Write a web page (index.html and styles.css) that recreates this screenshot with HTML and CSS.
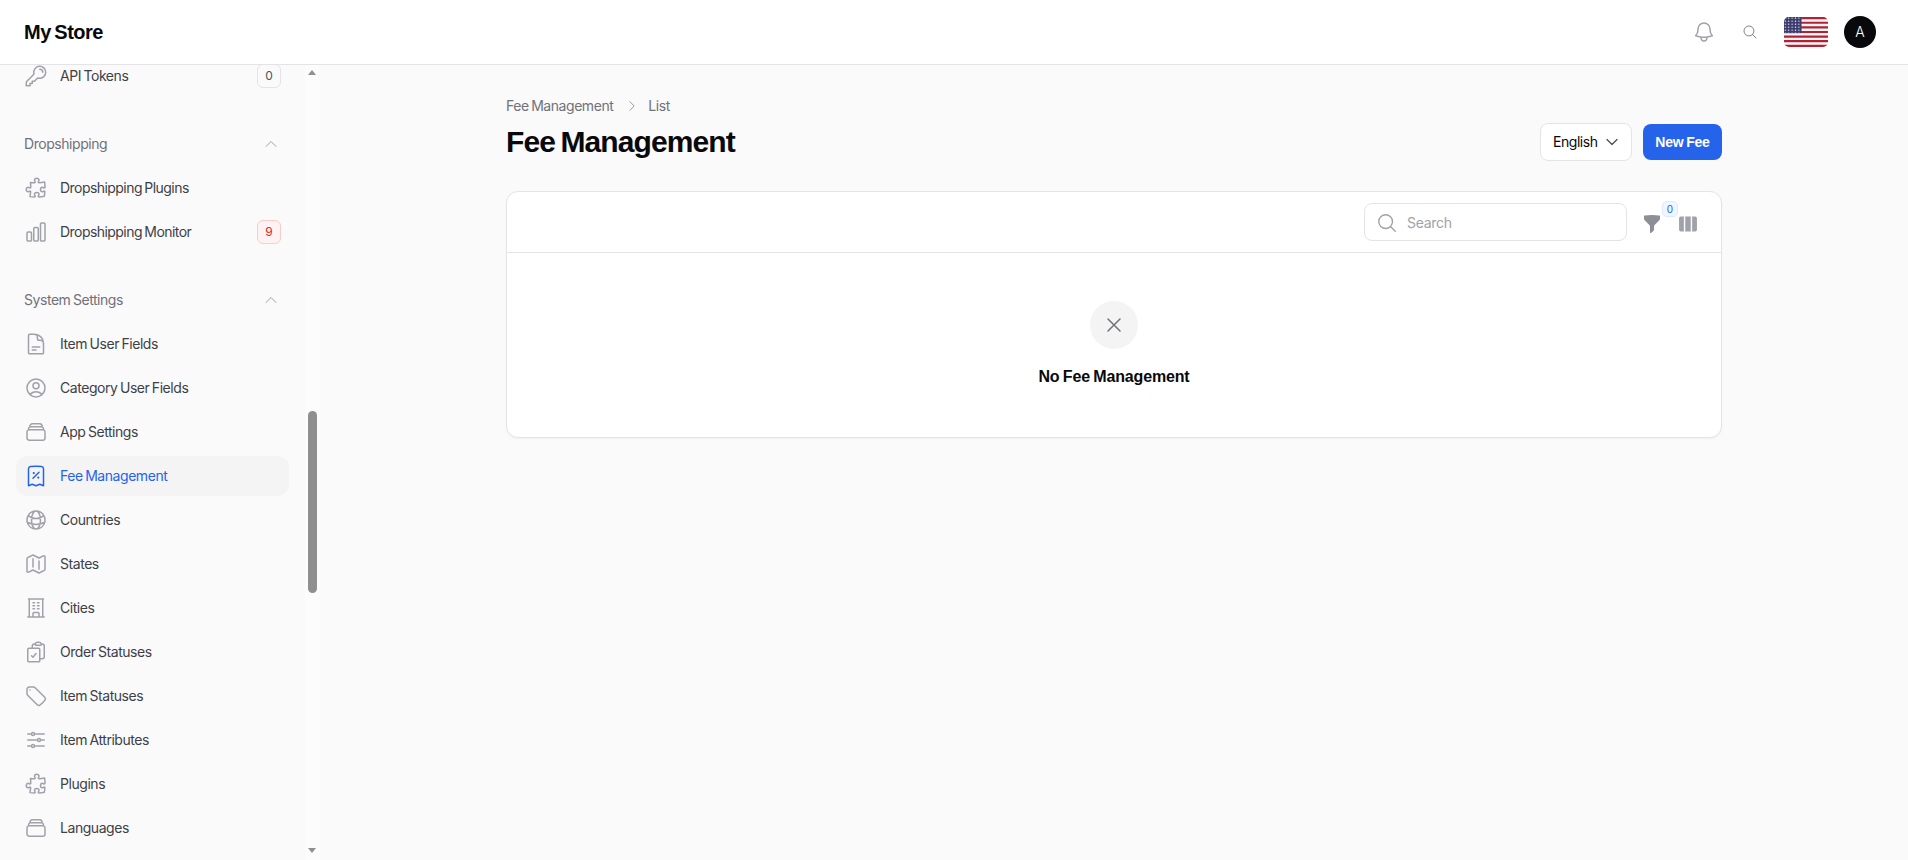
FILE: index.html
```html
<!DOCTYPE html>
<html lang="en">
<head>
<meta charset="utf-8">
<title>Fee Management</title>
<link rel="stylesheet" href="styles.css">
</head>
<body>
<svg class="defs" width="0" height="0" aria-hidden="true">
  <symbol id="i-puzzle" viewBox="0 0 24 24"><path d="M14.25 6.087c0-.355.186-.676.401-.959.221-.29.349-.634.349-1.003 0-1.036-1.007-1.875-2.25-1.875s-2.25.84-2.25 1.875c0 .369.128.713.349 1.003.215.283.401.604.401.959v0a.64.64 0 0 1-.657.643 48.39 48.39 0 0 1-4.163-.3c.186 1.613.293 3.25.315 4.907a.656.656 0 0 1-.658.663v0c-.355 0-.676-.186-.959-.401a1.647 1.647 0 0 0-1.003-.349c-1.036 0-1.875 1.007-1.875 2.25s.84 2.25 1.875 2.25c.369 0 .713-.128 1.003-.349.283-.215.604-.401.959-.401v0c.31 0 .555.26.532.57a48.039 48.039 0 0 1-.642 5.056c1.518.19 3.058.309 4.616.354a.64.64 0 0 0 .657-.643v0c0-.355-.186-.676-.401-.959a1.647 1.647 0 0 1-.349-1.003c0-1.035 1.008-1.875 2.25-1.875 1.243 0 2.25.84 2.25 1.875 0 .369-.128.713-.349 1.003-.215.283-.4.604-.4.959v0c0 .333.277.599.61.58a48.1 48.1 0 0 0 5.427-.63 48.05 48.05 0 0 0 .582-4.717.532.532 0 0 0-.533-.57v0c-.355 0-.676.186-.959.401-.29.221-.634.349-1.003.349-1.035 0-1.875-1.007-1.875-2.25s.84-2.25 1.875-2.25c.37 0 .713.128 1.003.349.283.215.604.401.96.401v0a.656.656 0 0 0 .658-.663 48.422 48.422 0 0 0-.37-5.36c-1.886.342-3.81.574-5.766.689a.578.578 0 0 1-.61-.58v0Z"/></symbol>
  <symbol id="i-stack" viewBox="0 0 24 24"><path d="M6 6.878V6a2.25 2.25 0 0 1 2.25-2.25h7.5A2.25 2.25 0 0 1 18 6v.878m-12 0c.235-.083.487-.128.75-.128h10.5c.263 0 .515.045.75.128m-12 0A2.25 2.25 0 0 0 4.5 9v.878m13.5-3A2.25 2.25 0 0 1 19.5 9v.878m0 0a2.246 2.246 0 0 0-.75-.128H5.25c-.263 0-.515.045-.75.128m15 0A2.25 2.25 0 0 1 21 12v6a2.25 2.25 0 0 1-2.25 2.25H5.25A2.25 2.25 0 0 1 3 18v-6c0-.98.626-1.813 1.5-2.122"/></symbol>
  <symbol id="i-up" viewBox="0 0 24 24"><path d="m4.5 15.75 7.5-7.5 7.5 7.5"/></symbol>
</svg>

<header class="topbar">
  <div class="brand">My Store</div>
  <div class="top-actions">
    <svg class="ico bell" viewBox="0 0 24 24"><path d="M14.857 17.082a23.848 23.848 0 0 0 5.454-1.31A8.967 8.967 0 0 1 18 9.75V9A6 6 0 0 0 6 9v.75a8.967 8.967 0 0 1-2.312 6.022c1.733.64 3.56 1.085 5.455 1.31m5.714 0a24.255 24.255 0 0 1-5.714 0m5.714 0a3 3 0 1 1-5.714 0"/></svg>
    <svg class="ico glass" viewBox="0 0 24 24"><path d="m21 21-5.197-5.197m0 0A7.5 7.5 0 1 0 5.196 5.196a7.5 7.5 0 0 0 10.607 10.607Z"/></svg>
    <svg class="flag" viewBox="0 0 44 30">
      <defs>
        <pattern id="stars" width="3.4" height="3" patternUnits="userSpaceOnUse"><circle cx="1.3" cy="1.2" r=".65" fill="#fff"/></pattern>
      </defs>
      <rect width="44" height="30" fill="#f8f6f6"/>
      <path class="stripe" d="M0 1.15h44M0 5.76h44M0 10.38h44M0 15h44M0 19.6h44M0 24.2h44M0 28.85h44"/>
      <rect width="17.6" height="16.2" fill="#3c3b6e"/>
      <rect width="17.6" height="16.2" fill="url(#stars)"/>
    </svg>
    <div class="avatar">A</div>
  </div>
</header>

<div class="shell">
  <aside class="sidebar">
    <nav class="nav">
      <div class="group first">
        <a class="item"><svg class="ico nav-ico" viewBox="0 0 24 24"><path d="M15.75 5.25a3 3 0 0 1 3 3m3 0a6 6 0 0 1-7.029 5.912c-.563-.097-1.159.026-1.563.43L10.5 17.25H8.25v2.25H6v2.25H2.25v-2.818c0-.597.237-1.17.659-1.591l6.499-6.499c.404-.404.527-1 .43-1.563A6 6 0 1 1 21.75 8.25Z"/></svg><span class="label">API Tokens</span><span class="count">0</span></a>
      </div>
      <div class="group">
        <div class="group-head"><span>Dropshipping</span><svg class="ico chev"><use href="#i-up"/></svg></div>
        <a class="item"><svg class="ico nav-ico"><use href="#i-puzzle"/></svg><span class="label tight">Dropshipping Plugins</span></a>
        <a class="item"><svg class="ico nav-ico" viewBox="0 0 24 24"><path d="M3 13.125C3 12.504 3.504 12 4.125 12h2.25c.621 0 1.125.504 1.125 1.125v6.75C7.5 20.496 6.996 21 6.375 21h-2.25A1.125 1.125 0 0 1 3 19.875v-6.75ZM9.75 8.625c0-.621.504-1.125 1.125-1.125h2.25c.621 0 1.125.504 1.125 1.125v11.25c0 .621-.504 1.125-1.125 1.125h-2.25a1.125 1.125 0 0 1-1.125-1.125V8.625ZM16.5 4.125c0-.621.504-1.125 1.125-1.125h2.25C20.496 3 21 3.504 21 4.125v15.75c0 .621-.504 1.125-1.125 1.125h-2.25a1.125 1.125 0 0 1-1.125-1.125V4.125Z"/></svg><span class="label tight">Dropshipping Monitor</span><span class="count danger">9</span></a>
      </div>
      <div class="group">
        <div class="group-head"><span>System Settings</span><svg class="ico chev"><use href="#i-up"/></svg></div>
        <a class="item"><svg class="ico nav-ico" viewBox="0 0 24 24"><path d="M19.5 14.25v-2.625a3.375 3.375 0 0 0-3.375-3.375h-1.5A1.125 1.125 0 0 1 13.5 7.125v-1.5a3.375 3.375 0 0 0-3.375-3.375H8.25m0 12.75h7.5m-7.5 3H12M10.5 2.25H5.625c-.621 0-1.125.504-1.125 1.125v17.25c0 .621.504 1.125 1.125 1.125h12.75c.621 0 1.125-.504 1.125-1.125V11.25a9 9 0 0 0-9-9Z"/></svg><span class="label">Item User Fields</span></a>
        <a class="item"><svg class="ico nav-ico" viewBox="0 0 24 24"><path d="M17.982 18.725A7.488 7.488 0 0 0 12 15.75a7.488 7.488 0 0 0-5.982 2.975m11.963 0a9 9 0 1 0-11.963 0m11.963 0A8.966 8.966 0 0 1 12 21a8.966 8.966 0 0 1-5.982-2.275M15 9.75a3 3 0 1 1-6 0 3 3 0 0 1 6 0Z"/></svg><span class="label">Category User Fields</span></a>
        <a class="item"><svg class="ico nav-ico"><use href="#i-stack"/></svg><span class="label">App Settings</span></a>
        <a class="item active"><svg class="ico nav-ico" viewBox="0 0 24 24"><path d="m9 14.25 6-6m4.5-3.493V21.75l-3.75-1.5-3.75 1.5-3.75-1.5-3.75 1.5V4.757c0-1.108.806-2.057 1.907-2.185a48.507 48.507 0 0 1 11.186 0c1.1.128 1.907 1.077 1.907 2.185ZM9.75 9h.008v.008H9.75V9Zm.375 0a.375.375 0 1 1-.75 0 .375.375 0 0 1 .75 0Zm4.125 4.5h.008v.008h-.008V13.5Zm.375 0a.375.375 0 1 1-.75 0 .375.375 0 0 1 .75 0Z"/></svg><span class="label">Fee Management</span></a>
        <a class="item"><svg class="ico nav-ico" viewBox="0 0 24 24"><path d="M12 21a9.004 9.004 0 0 0 8.716-6.747M12 21a9.004 9.004 0 0 1-8.716-6.747M12 21c2.485 0 4.5-4.03 4.5-9S14.485 3 12 3m0 18c-2.485 0-4.5-4.03-4.5-9S9.515 3 12 3m0 0a8.997 8.997 0 0 1 7.843 4.582M12 3a8.997 8.997 0 0 0-7.843 4.582m15.686 0A11.953 11.953 0 0 1 12 10.5c-2.998 0-5.74-1.1-7.843-2.918m15.686 0A8.959 8.959 0 0 1 21 12c0 .778-.099 1.533-.284 2.253m0 0A17.919 17.919 0 0 1 12 16.5c-3.162 0-6.133-.815-8.716-2.247m0 0A9.015 9.015 0 0 1 3 12c0-1.605.42-3.113 1.157-4.418"/></svg><span class="label">Countries</span></a>
        <a class="item"><svg class="ico nav-ico" viewBox="0 0 24 24"><path d="M9 6.75V15m6-6v8.25m.503 3.498 4.875-2.437c.381-.19.622-.58.622-1.006V4.82c0-.836-.88-1.38-1.628-1.006l-3.869 1.934c-.317.159-.69.159-1.006 0L9.503 3.252a1.125 1.125 0 0 0-1.006 0L3.622 5.689C3.24 5.88 3 6.27 3 6.695V19.18c0 .836.88 1.38 1.628 1.006l3.869-1.934c.317-.159.69-.159 1.006 0l4.994 2.497c.317.158.69.158 1.006 0Z"/></svg><span class="label">States</span></a>
        <a class="item"><svg class="ico nav-ico" viewBox="0 0 24 24"><path d="M3.75 21h16.5M4.5 3h15M5.25 3v18m13.5-18v18M9 6.75h1.5m-1.5 3h1.5m-1.5 3h1.5m3-6H15m-1.5 3H15m-1.5 3H15M9 21v-3.375c0-.621.504-1.125 1.125-1.125h3.75c.621 0 1.125.504 1.125 1.125V21"/></svg><span class="label">Cities</span></a>
        <a class="item"><svg class="ico nav-ico" viewBox="0 0 24 24"><path d="M11.35 3.836c-.065.21-.1.433-.1.664 0 .414.336.75.75.75h4.5a.75.75 0 0 0 .75-.75 2.25 2.25 0 0 0-.1-.664m-5.8 0A2.251 2.251 0 0 1 13.5 2.25H15c1.012 0 1.867.668 2.15 1.586m-5.8 0c-.376.023-.75.05-1.124.08C9.095 4.01 8.25 4.973 8.25 6.108V8.25m8.9-4.414c.376.023.75.05 1.124.08 1.131.094 1.976 1.057 1.976 2.192V16.5A2.25 2.25 0 0 1 18 18.75h-2.25m-7.5-10.5H4.875c-.621 0-1.125.504-1.125 1.125v11.25c0 .621.504 1.125 1.125 1.125h9.75c.621 0 1.125-.504 1.125-1.125V18.75m-7.5-10.5h6.375c.621 0 1.125.504 1.125 1.125v9.375m-8.25-3 1.5 1.5 3-3.75"/></svg><span class="label">Order Statuses</span></a>
        <a class="item"><svg class="ico nav-ico" viewBox="0 0 24 24"><path d="M9.568 3H5.25A2.25 2.25 0 0 0 3 5.25v4.318c0 .597.237 1.17.659 1.591l9.581 9.581c.699.699 1.78.872 2.607.33a18.095 18.095 0 0 0 5.223-5.223c.542-.827.369-1.908-.33-2.607L11.16 3.66A2.25 2.25 0 0 0 9.568 3Z"/><path d="M6 6h.008v.008H6V6Z"/></svg><span class="label">Item Statuses</span></a>
        <a class="item"><svg class="ico nav-ico" viewBox="0 0 24 24"><path d="M10.5 6h9.75M10.5 6a1.5 1.5 0 1 1-3 0m3 0a1.5 1.5 0 1 0-3 0M3.75 6H7.5m3 12h9.75m-9.75 0a1.5 1.5 0 0 1-3 0m3 0a1.5 1.5 0 0 0-3 0m-3.75 0H7.5m9-6h3.75m-3.75 0a1.5 1.5 0 0 1-3 0m3 0a1.5 1.5 0 0 0-3 0m-9.75 0h9.75"/></svg><span class="label">Item Attributes</span></a>
        <a class="item"><svg class="ico nav-ico"><use href="#i-puzzle"/></svg><span class="label">Plugins</span></a>
        <a class="item"><svg class="ico nav-ico"><use href="#i-stack"/></svg><span class="label">Languages</span></a>
      </div>
    </nav>
    <div class="scrolltrack">
      <span class="arrow up"></span>
      <span class="thumb"></span>
      <span class="arrow down"></span>
    </div>
  </aside>

  <main class="main">
    <div class="container">
      <div class="crumbs"><span>Fee Management</span><svg class="ico crumb-sep" viewBox="0 0 24 24"><path d="m8.25 4.5 7.5 7.5-7.5 7.5"/></svg><span>List</span></div>
      <div class="title-row">
        <h1>Fee Management</h1>
        <div class="title-actions">
          <div class="select"><span>English</span><svg class="ico sel-chev" viewBox="0 0 24 24"><path d="m19.5 8.25-7.5 7.5-7.5-7.5"/></svg></div>
          <a class="btn">New Fee</a>
        </div>
      </div>
      <section class="card">
        <div class="toolbar">
          <div class="search"><svg class="ico search-ico" viewBox="0 0 24 24"><path d="m21 21-5.197-5.197m0 0A7.5 7.5 0 1 0 5.196 5.196a7.5 7.5 0 0 0 10.607 10.607Z"/></svg><span>Search</span></div>
          <div class="filter">
            <svg class="funnel" viewBox="0 0 20 20"><path d="M2.628 1.601C5.028 1.206 7.49 1 10 1s4.973.206 7.372.601a.75.75 0 0 1 .628.74v2.288a2.25 2.25 0 0 1-.659 1.59l-4.682 4.683a2.25 2.25 0 0 0-.659 1.59v3.037c0 .684-.31 1.33-.844 1.757l-1.937 1.55A.75.75 0 0 1 8 18.25v-5.757a2.25 2.25 0 0 0-.659-1.591L2.659 6.22A2.25 2.25 0 0 1 2 4.629V2.34a.75.75 0 0 1 .628-.74Z"/></svg>
            <span class="filter-badge">0</span>
          </div>
          <svg class="columns" viewBox="0 0 24 24"><path d="M15 3.75H9v16.5h6V3.75ZM16.5 20.25h3.375c1.035 0 1.875-.84 1.875-1.875V5.625c0-1.036-.84-1.875-1.875-1.875H16.5v16.5ZM4.125 3.75H7.5v16.5H4.125a1.875 1.875 0 0 1-1.875-1.875V5.625c0-1.036.84-1.875 1.875-1.875Z"/></svg>
        </div>
        <div class="empty">
          <div class="empty-ico"><svg class="ico x" viewBox="0 0 24 24"><path d="M6 18 18 6M6 6l12 12"/></svg></div>
          <h4>No Fee Management</h4>
        </div>
      </section>
    </div>
  </main>
</div>
</body>
</html>
```
FILE: styles.css
```css
* { box-sizing: border-box; }
html, body { height: 100%; }
body {
  margin: 0;
  height: 860px;
  overflow: hidden;
  display: flex;
  flex-direction: column;
  background: #fafafa;
  color: #09090b;
  font-family: Inter, "Noto Sans", sans-serif;
  font-size: 14px;
  line-height: 20px;
  letter-spacing: -0.45px;
  word-spacing: -1px;
}
.defs { position: absolute; }
.ico { fill: none; stroke: #a1a1aa; stroke-width: 1.5; stroke-linecap: round; stroke-linejoin: round; flex: none; }

/* top bar */
.topbar {
  flex: none;
  height: 65px;
  display: flex;
  align-items: center;
  justify-content: space-between;
  padding: 0 32px 0 24px;
  background: #fff;
  border-bottom: 1px solid #e4e4e7;
  position: relative;
  z-index: 2;
}
.brand { font-family: "Liberation Sans", Inter, sans-serif; font-size: 20px; font-weight: 700; letter-spacing: -0.5px; word-spacing: -1.5px; }
.top-actions { display: flex; align-items: center; }
.bell { width: 24px; height: 24px; margin-right: 26px; }
.glass { width: 16px; height: 16px; margin-right: 26px; stroke: #71717a; stroke-width: 1.3; }
.flag { width: 44px; height: 30px; border-radius: 5px; margin-right: 16px; }
.stripe { stroke: #b22234; stroke-width: 2.2; fill: none; }
.avatar {
  width: 32px; height: 32px; border-radius: 50%;
  background: #09090b; color: #fff;
  display: flex; align-items: center; justify-content: center;
  font-size: 14px; font-weight: 300; letter-spacing: 0;
}

/* layout */
.shell { flex: 1; min-height: 0; display: flex; }
.sidebar { flex: none; width: 320px; display: flex; }
.nav { flex: 1; min-width: 0; overflow: hidden; padding: 0 16px; }
.group { margin-top: 38px; display: flex; flex-direction: column; gap: 4px; }
.group.first { margin-top: -9px; }
.group-head {
  height: 20px;
  margin-bottom: 10px;
  padding: 0 8px;
  display: flex; align-items: center; justify-content: space-between;
  color: #71717a;
}
.chev { width: 16px; height: 16px; margin-right: 2px; }
.item {
  height: 40px;
  flex: none;
  padding: 0 8px;
  display: flex; align-items: center; gap: 12px;
  border-radius: 12px;
  color: #3f3f46;
}
.nav-ico { width: 24px; height: 24px; }
.label { flex: 1; }
.label.tight { letter-spacing: -0.55px; }
.count {
  width: 24px; height: 24px;
  display: flex; align-items: center; justify-content: center;
  border: 1px solid #e4e4e7; border-radius: 6px;
  font-size: 12px; color: #52525b; letter-spacing: 0;
}
.count.danger { background: #fef2f2; border-color: #fecaca; color: #dc2626; }
.item.active { background: #f4f4f5; color: #2563eb; }
.item.active .nav-ico { stroke: #2563eb; }

/* fake classic scrollbar */
.scrolltrack { flex: none; width: 15px; background: #fcfcfc; position: relative; }
.thumb { position: absolute; left: 3px; top: 346px; width: 9px; height: 182px; border-radius: 5px; background: #8f8f8f; }
.arrow { position: absolute; left: 3px; width: 0; height: 0; border-left: 4.5px solid transparent; border-right: 4.5px solid transparent; }
.arrow.up { top: 5px; border-bottom: 5px solid #8f8f8f; }
.arrow.down { bottom: 7px; border-top: 5px solid #8f8f8f; }

/* main */
.main { flex: 1; min-width: 0; padding-top: 31px; }
.container { width: 1216px; margin: 0 auto; }
.crumbs { display: flex; align-items: center; color: #71717a; height: 20px; }
.crumb-sep { width: 14px; height: 14px; margin: 0 9px 0 12px; stroke: #8a8a92; }
.title-row { margin-top: 7px; display: flex; align-items: center; justify-content: space-between; height: 38px; }
h1 { margin: 0; font-family: "Liberation Sans", Inter, sans-serif; font-size: 30px; line-height: 36px; font-weight: 700; letter-spacing: -0.9px; word-spacing: -2px; }
.title-actions { display: flex; align-items: center; gap: 11px; }
.select {
  width: 92px; height: 38px;
  padding: 0 11px 0 12px;
  display: flex; align-items: center; justify-content: space-between;
  background: #fff; border: 1px solid #e4e4e7; border-radius: 8px;
}
.sel-chev { width: 16px; height: 16px; stroke: #52525b; stroke-width: 2; }
.btn {
  width: 79px; height: 36px;
  display: flex; align-items: center; justify-content: center;
  background: #2563eb; color: #fff; border-radius: 8px;
  font-family: "Liberation Sans", Inter, sans-serif;
  font-weight: 700; letter-spacing: -0.2px;
}
.card { margin-top: 30px; height: 247px; background: #fff; border: 1px solid #e4e4e7; border-radius: 12px; box-shadow: 0 1px 2px rgba(0,0,0,.04); }
.toolbar {
  height: 61px;
  display: flex; align-items: center; justify-content: flex-end;
  padding: 0 22px 0 0;
  border-bottom: 1px solid #e4e4e7;
}
.search {
  width: 263px; height: 38px;
  display: flex; align-items: center; gap: 9px;
  padding: 1px 12px 0 11px;
  border: 1px solid #e4e4e7; border-radius: 8px;
  color: #a1a1aa;
  letter-spacing: -0.3px;
}
.search-ico { width: 22px; height: 22px; }
.filter { position: relative; margin-left: 15px; width: 20px; height: 20px; margin-top: 4px; }
.funnel { display: block; width: 20px; height: 20px; fill: #8e8e96; }
.filter-badge {
  position: absolute; left: 20px; top: -13px;
  width: 16px; height: 16px;
  display: flex; align-items: center; justify-content: center;
  background: #eff6ff; border: 1px solid #dbeafe; border-radius: 5px;
  font-size: 10px; line-height: 1; color: #2563eb; letter-spacing: 0;
}
.columns { width: 22px; height: 22px; margin-left: 15px; margin-top: 4px; fill: #a1a1aa; }
.empty { display: flex; flex-direction: column; align-items: center; padding-top: 48px; }
.empty-ico {
  width: 48px; height: 48px; border-radius: 50%;
  background: #f4f4f5;
  display: flex; align-items: center; justify-content: center;
}
.x { width: 24px; height: 24px; stroke: #71717a; }
h4 { margin: 16px 0 0; font-family: "Liberation Sans", Inter, sans-serif; font-size: 16px; line-height: 24px; font-weight: 700; letter-spacing: -0.15px; word-spacing: -1px; }
```
